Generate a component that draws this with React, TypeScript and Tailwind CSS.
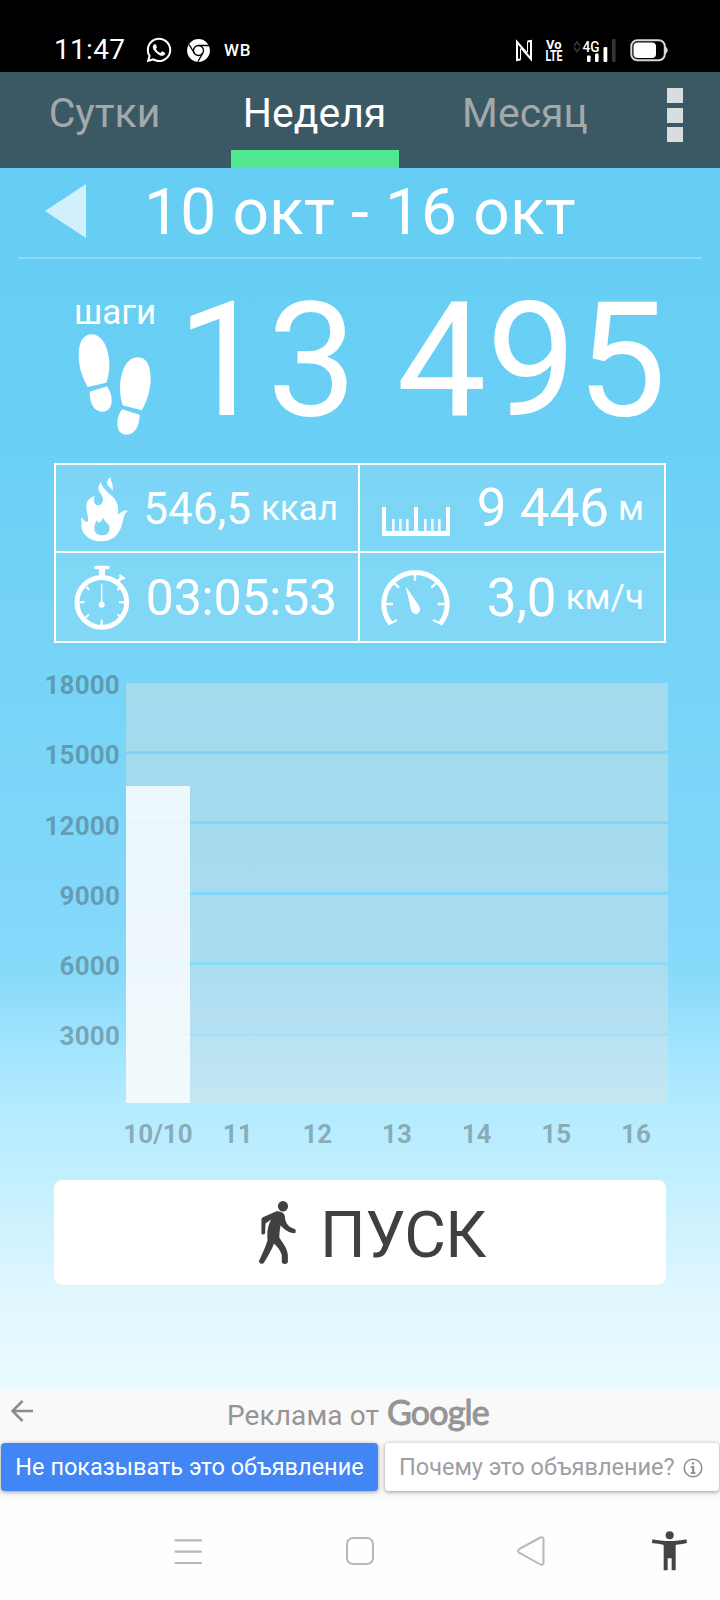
import React from 'react';
import { FaWhatsapp } from 'react-icons/fa';

const MAX_STEPS = 18000;
const scale = [18000, 15000, 12000, 9000, 6000, 3000];

const days = [
  { label: '10/10', steps: 13590 },
  { label: '11', steps: 0 },
  { label: '12', steps: 0 },
  { label: '13', steps: 0 },
  { label: '14', steps: 0 },
  { label: '15', steps: 0 },
  { label: '16', steps: 0 },
];

const ChromeIcon = () => (
  <svg className="w-[23px] h-[23px]" viewBox="0 0 23 23" fill="none" stroke="#000" strokeWidth="1.3">
    <circle cx="11.5" cy="11.5" r="11.4" fill="#fff" stroke="none" />
    <circle cx="11.5" cy="11.5" r="5" />
    <path d="M11.5 6.5H22M7.2 14L2.2 5.6M15.8 14L10.8 22.8" />
  </svg>
);

const NfcIcon = () => (
  <svg className="w-[18px] h-[23px]" viewBox="0 0 18 23" fill="none" stroke="#fff" strokeWidth="2">
    <path d="M5.500 20.500L2 21V3L12 14.500M12.500 2.500L16 2V20L6 8.500" />
    <path d="M5.500 20.500V10M12.500 2.500V13" strokeWidth="1" />
  </svg>
);

const VolteIcon = () => (
  <svg className="w-[18px] h-[26px] overflow-visible" viewBox="0 0 18 26" fill="#fff" fontFamily="Roboto" fontWeight="700">
    <text x="1" y="12" fontSize="13" textLength="15.500" lengthAdjust="spacingAndGlyphs">Vo</text>
    <text x="0.500" y="24" fontSize="14" textLength="17" lengthAdjust="spacingAndGlyphs">LTE</text>
  </svg>
);

const SignalIcon = () => (
  <svg className="w-[44px] h-[25px]" viewBox="572 37 44 25">
    <path d="M574 45l3-4 3 4M574 46.500l3 4 3-4" fill="none" stroke="#333" strokeWidth="1.800" />
    <text x="582.500" y="50.500" fontFamily="Roboto" fontSize="15" fontWeight="500" fill="#fff" textLength="17" lengthAdjust="spacingAndGlyphs">4G</text>
    <g fill="#fff">
      <rect x="587" y="54.500" width="3.600" height="6.500" rx="1" />
      <rect x="595" y="52.500" width="3.600" height="8.500" rx="1" />
      <rect x="603.500" y="46" width="3.800" height="15" rx="1" />
      <rect x="612" y="38" width="3.600" height="23" rx="1" fill="#333" />
    </g>
  </svg>
);

const BatteryIcon = () => (
  <svg className="w-[39px] h-[23px]" viewBox="0 0 39 23">
    <rect x="1.300" y="1.300" width="33.500" height="20" rx="6" fill="none" stroke="#d8d8d8" strokeWidth="2" />
    <rect x="3.500" y="3.500" width="22.500" height="15.500" rx="4" fill="#fff" />
    <path d="M35 7.500c3.500 1 3.500 6.500 0 7.500z" fill="#d8d8d8" />
  </svg>
);

const StepsIcon = () => (
  <svg className="w-[74px] h-[102px]" viewBox="235 190 222 306" fill="#fff">
    <path d="M264 349C250 325 236 290 237 250C238 212 252 191 277 191C308 191 329 235 329 283C329 305 325 322 320 336Z" />
    <path d="M270 363L322 347C332 362 336 375 336 388C336 410 325 423 309 423C284 423 270 400 270 363Z" />
    <path d="M369 404C363 385 361 370 361 350C362 300 382 260 415 260C440 260 453 285 453 325C453 360 440 395 426 419Z" />
    <path d="M367 416L420 432C420 465 405 492 380 492C362 492 353 478 353 458C353 443 358 428 367 416Z" />
  </svg>
);

const FlameIcon = () => (
  <svg className="w-[48px] h-[65px]" viewBox="122 80 144 195" fill="#fff">
    <path
      fillRule="evenodd"
      d="M181 95C170 112 174 122 184 134C192 146 188 165 172 165C162 165 158 150 163 137C147 143 138 152 138 168C138 185 148 210 141 215C134 215 128 209 124 201C122 208 123 215 123 225C123 250 145 273 182 273C215 273 237 255 245 222C250 205 250 190 263 181C245 178 243 188 232 193C236 172 232 152 215 137C200 124 186 112 181 95ZM187 201C192 215 209 220 208 235C207 248 198 255 185 255C170 255 162 247 162 234C162 222 168 211 172 209C171 215 173 218 178 216C184 212 187 207 187 201Z"
    />
    <path d="M211 81C210 95 220 98 217 121C212 110 199 108 200 97C201 90 205 85 211 81Z" />
  </svg>
);

const StopwatchIcon = () => (
  <svg className="w-[56px] h-[65px]" viewBox="104 346 168 195" fill="none" stroke="#fff">
    <circle cx="187.500" cy="458" r="74.500" strokeWidth="15" />
    <path d="M170 353.500H206" strokeWidth="11" strokeLinecap="round" />
    <path d="M188 356V380" strokeWidth="18" />
    <path d="M234 397L247 384" strokeWidth="9" />
    <path d="M240 376L256 388" strokeWidth="8" />
    <path d="M118 458H136M239 458H257M187 510V530M141 412L150 421M234 421L243 412M139 504L149 494M235 494L245 504" strokeWidth="6" />
    <path d="M187 402V460" strokeWidth="4.500" />
    <circle cx="187" cy="465" r="9" fill="#fff" stroke="none" />
  </svg>
);

const RulerIcon = () => (
  <svg className="w-[68px] h-[29px]" viewBox="96 171 204 87" fill="#fff">
    <path d="M96 171H108V243H192V171H204V243H288V171H300V258H96Z" />
    <path d="M126 207h8v38h-8zM147 207h8v38h-8zM168 207h8v38h-8zM222 207h8v38h-8zM243 207h8v38h-8zM264 207h8v38h-8z" opacity="0.85" />
  </svg>
);

const GaugeIcon = () => (
  <svg className="w-[69px] h-[57px]" viewBox="95 356 207 171" fill="none" stroke="#fff">
    <path d="M123 519A95 95 0 1 1 274 519" strokeWidth="15" />
    <path d="M116 523L143 509M280 523L251 509" strokeWidth="6" />
    <path d="M197 372V391M110 461H131M265 461H286M135 399L149 412M260 399L246 412" strokeWidth="7" />
    <path d="M169 408L210 468C216 482 208 491 200 491C190 491 186 484 184 474Z" fill="#fff" stroke="none" />
  </svg>
);

const WalkIcon = () => (
  <svg className="w-[37px] h-[63px]" viewBox="537 122 91 190" preserveAspectRatio="none" fill="#404040">
    <ellipse cx="596" cy="138" rx="12.500" ry="16" />
    <path d="M580 153C590 153 600 158 601 170C601 182 606 195 616 202L627 208V218C620 222 606 214 597 204L590 196C589 205 587 218 587 232C596 250 606 262 608 285V305C608 313 594 315 593 305V285C590 270 582 260 574 250C568 270 558 290 549 308C546 314 536 312 537 303C545 280 553 262 558 240C556 215 559 195 567 178L553 190L552 220C550 224 544 224 543 220V178C543 174 545 172 548 170Z" />
  </svg>
);

const StatusBar = () => (
  <div className="h-[72px] bg-black text-white flex items-start justify-between pl-[54px] pr-[51px]">
    <div className="flex items-center h-[26px] mt-[37px]">
      <span className="w-[91px] text-[28px] leading-[28px] tracking-[0.3px]">11:47</span>
      <FaWhatsapp className="w-[28px] h-[28px] -mt-px" />
      <span className="ml-[14px]"><ChromeIcon /></span>
      <span className="ml-[14px] text-[17px] leading-none font-medium tracking-[0.8px]">WB</span>
    </div>
    <div className="flex items-center h-[26px] mt-[37px]">
      <NfcIcon />
      <span className="ml-[12px]"><VolteIcon /></span>
      <span className="ml-[9px]"><SignalIcon /></span>
      <span className="ml-[14px]"><BatteryIcon /></span>
    </div>
  </div>
);

const Tabs = () => (
  <div className="h-[96px] bg-[#3b5964] flex text-[41px] leading-none text-[#a3a8aa]">
    <div className="w-[209px] h-[82px] flex items-center justify-center">Сутки</div>
    <div className="w-[210px] ml-px flex flex-col items-center justify-between text-white">
      <div className="h-[82px] pr-px flex items-center">Неделя</div>
      <div className="w-[168px] h-[18px] -mt-1 shrink-0 bg-[#52e88f]" />
    </div>
    <div className="w-[210px] h-[82px] flex items-center justify-center">Месяц</div>
    <div className="ml-[37px] mt-[16px] flex flex-col gap-[4.500px]">
      <div className="w-4 h-[15px] bg-[#d8dee0]" />
      <div className="w-4 h-[15px] bg-[#d8dee0]" />
      <div className="w-4 h-[15px] bg-[#d8dee0]" />
    </div>
  </div>
);

const Stats = () => (
  <div className="mx-[54px] h-[180px] grid grid-cols-[302px_304px] grid-rows-[86px_88px] gap-0.5 p-0.5">
    <div className="bg-white/10 outline-2 outline-white flex items-center justify-between pl-[25px] pr-[20px]">
      <span className="mt-0.5"><FlameIcon /></span>
      <div className="flex items-center gap-[10px]">
        <span className="mt-0.5 text-[44px] leading-none">546,5</span>
        <span className="mt-px text-[35px] leading-none">ккал</span>
      </div>
    </div>
    <div className="bg-white/10 outline-2 outline-white flex items-center justify-between pl-[22px] pr-[20px]">
      <span className="mt-[27px]"><RulerIcon /></span>
      <div className="flex items-center gap-[9px]">
        <span className="mt-px text-[53px] leading-none">9 446</span>
        <span className="text-[35px] leading-none">м</span>
      </div>
    </div>
    <div className="bg-white/10 outline-2 outline-white flex items-center justify-between pl-[18px] pr-[21px]">
      <StopwatchIcon />
      <span className="mt-0.5 text-[50px] leading-none tracking-[-0.2px]">03:05:53</span>
    </div>
    <div className="bg-white/10 outline-2 outline-white flex items-center justify-between pl-[21px] pr-[20px]">
      <GaugeIcon />
      <div className="flex items-center gap-[9px]">
        <span className="mt-0.5 text-[53px] leading-none">3,0</span>
        <span className="text-[35px] leading-none">км/ч</span>
      </div>
    </div>
  </div>
);

const Chart = () => (
  <div className="mt-[40px] text-[26px] leading-none font-bold text-[#303030]/36">
    <div className="flex h-[420px]">
      <div className="w-[120px] mr-[6px] flex flex-col items-end gap-[44.300px] -mt-[11px] tracking-[0.2px]">
        {scale.map((v) => (
          <span key={v}>{v}</span>
        ))}
      </div>
      <div className="relative w-[542px] flex flex-col gap-[3px]">
        {scale.map((v) => (
          <div key={v} className="flex-1 bg-[#e1e1e1]/40" />
        ))}
        <div className="absolute inset-0 flex items-end justify-between">
          {days.map((d) => (
            <div key={d.label} className="w-16 bg-white/80" style={{ height: `${(d.steps / MAX_STEPS) * 100}%` }} />
          ))}
        </div>
      </div>
    </div>
    <div className="ml-[126px] mt-[18px] w-[542px] flex justify-between">
      {days.map((d) => (
        <div key={d.label} className="w-16 flex justify-center">{d.label}</div>
      ))}
    </div>
  </div>
);

const AdBar = () => (
  <div className="h-[112px] bg-[#f9f9f9]">
    <div className="h-[54px] flex items-start text-[#959595]">
      <svg className="mt-[10px] ml-[10px] w-[24px] h-[24px]" viewBox="0 0 24 24" fill="none" stroke="#8c8c8c" strokeWidth="2.500">
        <path d="M23 12H3M12.500 2L2.500 12L12.500 22" />
      </svg>
      <div className="ml-[193px] mt-[4px] h-[40px] flex items-baseline">
        <span className="text-[28px] leading-[37px] tracking-[0.1px]">Реклама от</span>
        <span className="ml-[8px] font-['Lato'] text-[34px] leading-[37px] tracking-[-0.8px] [-webkit-text-stroke:1px_#959595]">Google</span>
      </div>
    </div>
    <div className="flex items-center gap-[7px] pl-px pr-px">
      <div className="w-[377px] h-[48px] pt-0.5 rounded bg-[#4285f4] shadow-[0_1px_4px_rgba(0,0,0,0.4)] flex items-center justify-center text-[23.5px] leading-none text-white whitespace-nowrap">
        Не показывать это объявление
      </div>
      <div className="w-[334px] h-[48px] pt-0.5 rounded bg-white shadow-[0_1px_4px_rgba(0,0,0,0.4)] flex items-center pl-[14px] text-[23.5px] leading-none text-[#9e9ea4] whitespace-nowrap">
        Почему это объявление?
        <svg className="ml-[8px] w-[20px] h-[20px] shrink-0" viewBox="0 0 20 20" fill="none" stroke="#8f8f8f">
          <circle cx="10" cy="10" r="8.800" strokeWidth="1.600" />
          <path d="M10 4.200V6.600M7.800 9H10.200V15M7.800 15H12.400" strokeWidth="2.200" />
        </svg>
      </div>
    </div>
  </div>
);

const NavBar = () => (
  <div className="h-[99px] bg-[#fefefe] flex items-start pt-[30px]">
    <svg className="ml-[174px] mt-[7px] w-[28px] h-[28px]" viewBox="0 0 28 28" stroke="#b8b8b8" strokeWidth="2.200" strokeLinecap="round">
      <path d="M1.500 2.300H27M1.500 13.700H27M1.500 25H27" />
    </svg>
    <div className="ml-[144px] mt-[6px] w-[28px] h-[28px] border-2 border-[#b8b8b8] rounded-[7px]" />
    <svg className="ml-[142px] mt-[4px] w-[29px] h-[32px]" viewBox="0 0 29 32" fill="none" stroke="#b8b8b8" strokeWidth="2" strokeLinejoin="round">
      <path d="M24.500 2.500L3 14.200Q1 16 3 17.600L24.500 29.500Q27.500 30.500 27.500 27.500V4.500Q27.500 1.500 24.500 2.500Z" />
    </svg>
    <svg className="ml-[107px] w-[36px] h-[40px]" viewBox="876 482 108 120" fill="#444">
      <circle cx="929" cy="495" r="12" />
      <path d="M877 507C910 514 948 514 979 507L981 518C967 522 955 522 947 524V600H935V564H923V600H911V524C900 521 890 520 876 518Z" />
    </svg>
  </div>
);

const App: React.FC = () => {
  return (
    <div className="w-[720px] h-[1600px] overflow-hidden flex flex-col font-['Roboto',sans-serif]">
      <StatusBar />
      <Tabs />
      <main className="h-[1221px] text-white bg-[linear-gradient(180deg,#65cdf3_0%,#6acff5_20%,#76d4f6_40%,#81d7fa_60%,#88dafa_66%,#a3e5ff_72.5%,#b4ebff_77%,#c0efff_82%,#dff6fe_92%,#eafbff_100%)]">
        {/* Period */}
        <div className="mx-[18px] h-[91px] border-b-2 border-white/25 flex">
          <svg className="ml-[27px] mt-[16px] w-[41px] h-[54px]" viewBox="0 0 41 54" fill="#d2f0fc">
            <path d="M0 27L41 0V54Z" />
          </svg>
          <div className="ml-[58px] h-[90px] flex items-center text-[64px] leading-none tracking-[0.2px] whitespace-nowrap">10 окт - 16 окт</div>
        </div>

        {/* Steps */}
        <div className="h-[204px] flex pl-[74px]">
          <div className="w-[103px] pt-[36px]">
            <div className="text-[35px] leading-[36px]">шаги</div>
            <div className="mt-[3px] pl-[4px]"><StepsIcon /></div>
          </div>
          <div className="h-[203px] flex items-center text-[160px] leading-none whitespace-nowrap">13 495</div>
        </div>

        <Stats />
        <Chart />

        <div className="mx-[54px] mt-[33px] h-[105px] rounded-lg bg-white flex items-center text-[#404040]">
          <span className="ml-[205px]"><WalkIcon /></span>
          <span className="ml-[24px] mt-[6px] text-[64px] leading-none tracking-[-0.5px]">ПУСК</span>
        </div>
      </main>
      <AdBar />
      <NavBar />
    </div>
  );
};

export default App;
